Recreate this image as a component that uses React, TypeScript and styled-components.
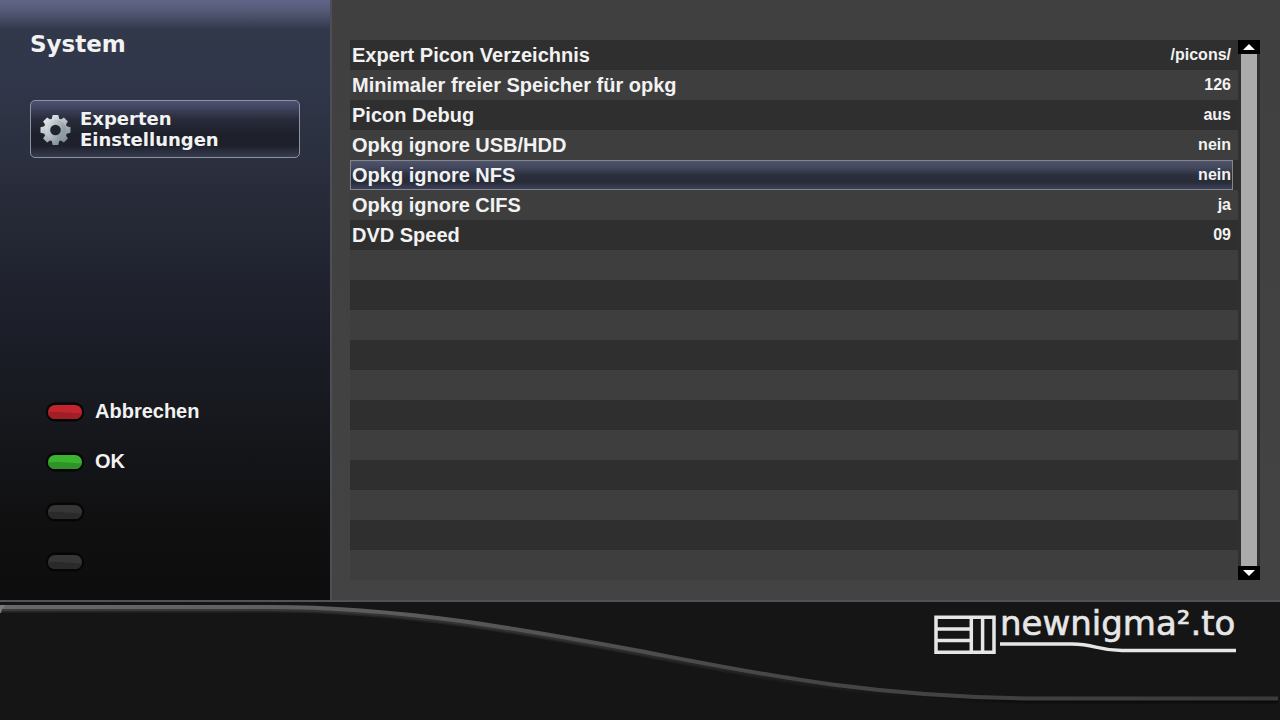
import React from "react";
import styled, { createGlobalStyle } from "styled-components";

const GlobalStyle = createGlobalStyle`
  *, *::before, *::after { box-sizing: border-box; }
  body { margin: 0; background: #151515; }
  button { font: inherit; color: inherit; }
`;

const Page = styled.div`
  min-height: 100vh;
  display: flex;
  flex-direction: column;
  background: #151515;
  color: #f2f2f2;
  font-family: "Liberation Sans", Arial, sans-serif;
  font-weight: 700;
`;

const Body = styled.div`
  flex: 1;
  display: grid;
  grid-template-columns: 332px minmax(0, 1fr);
`;

const Sidebar = styled.aside`
  display: flex;
  flex-direction: column;
  justify-content: space-between;
  padding: 28px 30px 14px;
  border-right: 2px solid #4e4e56;
  background: linear-gradient(
    #60658a 0,
    #555b78 10px,
    #31384a 30px,
    #31374a 80px,
    #282c3a 190px,
    #1d202b 310px,
    #16181d 420px,
    #101011 520px,
    #0d0d0d 600px
  );
`;

const Title = styled.h1`
  margin: 0 0 40px;
  font: 700 23px/32px "DejaVu Sans", sans-serif;
`;

const MenuButton = styled.button`
  width: 100%;
  display: flex;
  align-items: center;
  gap: 9px;
  padding: 7px 9px;
  border: 1px solid #8f919c;
  border-radius: 5px;
  background: linear-gradient(#4d5170 0, #41455f 12%, #282c3b 32%, #1d202a 60%, #1e212c 80%, #373c50 100%);
  text-align: left;
`;

const MenuText = styled.span`
  width: 160px;
  font: 700 18px/21px "DejaVu Sans", sans-serif;
`;

const Keys = styled.div`
  display: flex;
  flex-direction: column;
`;

const KeyButton = styled.button`
  height: 50px;
  display: flex;
  align-items: center;
  gap: 11px;
  padding: 0 0 0 16px;
  border: 0;
  background: none;
  font-size: 20px;
  line-height: 24px;
`;

const Main = styled.main`
  display: flex;
  align-items: flex-start;
  padding: 40px 20px 20px 18px;
  background: linear-gradient(#404040, #434343);
`;

const List = styled.ul`
  flex: 1;
  margin: 0;
  padding: 0;
  list-style: none;
  background: #303030;
`;

const Item = styled.li`
  height: 30px;
  &:nth-child(odd) { background: #2f2f2f; }
  &:nth-child(even) { background: #3e3e3e; }
`;

const Setting = styled.button<{ $selected: boolean }>`
  width: calc(100% - 5px);
  height: 30px;
  display: flex;
  align-items: center;
  justify-content: space-between;
  padding: 0 1px;
  border: 1px solid ${(p) => (p.$selected ? "#84868f" : "transparent")};
  background: ${(p) =>
    p.$selected
      ? "linear-gradient(#50546c 0, #41465c 25%, #2c303e 50%, #282b37 75%, #3a4058 100%)"
      : "none"};
`;

const Label = styled.span`
  font-size: 20px;
  line-height: 24px;
`;

const Value = styled.span`
  font-size: 16px;
  line-height: 24px;
`;

const Scrollbar = styled.div`
  width: 22px;
  align-self: stretch;
  display: flex;
  flex-direction: column;
  background: #303030;
`;

const Arrow = styled.button`
  height: 14px;
  display: flex;
  align-items: center;
  justify-content: center;
  padding: 0;
  border: 0;
  background: #000;
`;

const Thumb = styled.div`
  flex: 1;
  margin: 0 3px;
  background: #ababab;
`;

const Footer = styled.footer`
  display: grid;
  grid-template-columns: minmax(0, 1fr);
  border-top: 2px solid #52525a;
  background: #151515;
  & > * { grid-area: 1 / 1; }
`;

const Wave = styled.svg`
  display: block;
  width: 100%;
  height: 118px;
`;

const Brand = styled.svg`
  justify-self: end;
  margin-right: 42px;
`;

const settings = [
  ["Expert Picon Verzeichnis", "/picons/"],
  ["Minimaler freier Speicher für opkg", "126"],
  ["Picon Debug", "aus"],
  ["Opkg ignore USB/HDD", "nein"],
  ["Opkg ignore NFS", "nein"],
  ["Opkg ignore CIFS", "ja"],
  ["DVD Speed", "09"],
];
const emptyRows = 11;
const selectedRow = 4;

const keys = [
  { name: "Rot", text: "Abbrechen", top: "#c3252e", bottom: "#a01f27" },
  { name: "Grün", text: "OK", top: "#3bb531", bottom: "#2f9328" },
  { name: "Gelb", text: "", top: "#363636", bottom: "#2a2a2a" },
  { name: "Blau", text: "", top: "#363636", bottom: "#2a2a2a" },
];

function Gear() {
  return (
    <svg width="31" height="32" viewBox="-15.5 -17 31 32" aria-hidden="true">
      <defs>
        <linearGradient id="metal" gradientUnits="userSpaceOnUse" x1="-9" y1="-12" x2="9" y2="13">
          <stop offset="0" stopColor="#e3e7e9" />
          <stop offset="0.45" stopColor="#b4bdc3" />
          <stop offset="1" stopColor="#7d8992" />
        </linearGradient>
        <linearGradient id="ring" x1="0" y1="0" x2="1" y2="0.6">
          <stop offset="0" stopColor="#d9dee1" />
          <stop offset="1" stopColor="#8f9aa2" />
        </linearGradient>
      </defs>
      <g fill="url(#metal)">
        <circle r="11.8" />
        <path d="M-4 -10L-2.8 -15H2.8L4 -10V10L2.8 15H-2.8L-4 10Z" />
        <path d="M-10 -4L-15 -2.8V2.8L-10 4H10L15 2.8V-2.8L10 -4Z" />
        <path d="M-4.6 -9.9L-8.4 -12.4L-12.4 -8.4L-9.9 -4.6L4.6 9.9L8.4 12.4L12.4 8.4L9.9 4.6Z" />
        <path d="M4.6 -9.9L8.4 -12.4L12.4 -8.4L9.9 -4.6L-4.6 9.9L-8.4 12.4L-12.4 8.4L-9.9 4.6Z" />
      </g>
      <circle r="8" fill="none" stroke="url(#ring)" strokeWidth="5" />
      <circle r="5.3" fill="#20242e" />
    </svg>
  );
}

function Pill({ top, bottom }: { top: string; bottom: string }) {
  return (
    <svg width="38" height="22" viewBox="0 -2 38 22" aria-hidden="true">
      <rect x="0" y="0.5" width="38" height="19" rx="9" fill="#060606" />
      <rect x="2" y="3" width="34" height="14" rx="7" fill={top} />
      <path d="M2 10.5C13 8.5 23 12 35.8 11C35 15 32.5 17 29 17H9C5 17 2.2 14.5 2 10.5Z" fill={bottom} />
    </svg>
  );
}

function FooterWave() {
  const curve = "M0 3H270C400 3 520 25 640 47C760 70 870 93.5 1040 94.5H1278";
  return (
    <Wave viewBox="0 0 1280 118" preserveAspectRatio="none" aria-hidden="true">
      <defs>
        <linearGradient id="shine" gradientUnits="userSpaceOnUse" x1="0" y1="0" x2="1280" y2="0">
          <stop offset="0" stopColor="#686868" />
          <stop offset="0.3" stopColor="#5c5c5c" />
          <stop offset="0.6" stopColor="#474747" />
          <stop offset="1" stopColor="#3a3a3a" />
        </linearGradient>
        <linearGradient id="shade" gradientUnits="userSpaceOnUse" x1="0" y1="0" x2="1280" y2="0">
          <stop offset="0" stopColor="#3a3a3a" />
          <stop offset="0.45" stopColor="#303030" />
          <stop offset="0.8" stopColor="#0d0d0d" />
          <stop offset="1" stopColor="#0b0b0b" />
        </linearGradient>
      </defs>
      <g fill="none">
        <path d={curve} transform="translate(0 5)" stroke="url(#shade)" strokeWidth="5" opacity="0.5" />
        <path d={curve} transform="translate(0 4)" stroke="url(#shade)" strokeWidth="4" />
        <path d={curve} transform="translate(0 2)" stroke="url(#shine)" strokeWidth="4" />
      </g>
      <path d="M0 3H6L2 7L1 11H0Z" fill="#7a7a7a" />
    </Wave>
  );
}

function Logo() {
  return (
    <Brand width="306" height="58" viewBox="0 -2 306 58" role="img" aria-label="newnigma².to">
      <g fill="none" stroke="#e6e6e6" strokeWidth="3.5">
        <path d="M4 13.2H62V48.2H4Z" />
        <path d="M4 25H39M4 36.5H39" />
        <path d="M39.3 13.2V48.2M50.6 13.2V48.2" />
        <path d="M68 40H140C163 40 165 46.5 190 46.5H304" />
      </g>
      <text
        x="68"
        y="31"
        fill="#e6e6e6"
        stroke="#e6e6e6"
        strokeWidth="0.6"
        fontFamily="DejaVu Sans, sans-serif"
        fontSize="34"
        fontWeight="400"
      >
        newnigma².to
      </text>
    </Brand>
  );
}

export default function App() {
  return (
    <Page>
      <GlobalStyle />
      <Body>
        <Sidebar>
          <div>
            <Title>System</Title>
            <MenuButton type="button">
              <Gear />
              <MenuText>Experten Einstellungen</MenuText>
            </MenuButton>
          </div>
          <Keys>
            {keys.map((k) => (
              <KeyButton key={k.name} type="button" aria-label={k.text || k.name}>
                <Pill top={k.top} bottom={k.bottom} />
                {k.text}
              </KeyButton>
            ))}
          </Keys>
        </Sidebar>
        <Main>
          <List>
            {settings.map(([label, value], i) => (
              <Item key={label}>
                <Setting type="button" $selected={i === selectedRow} aria-pressed={i === selectedRow}>
                  <Label>{label}</Label>
                  <Value>{value}</Value>
                </Setting>
              </Item>
            ))}
            {Array.from({ length: emptyRows }, (_, i) => (
              <Item key={i} aria-hidden="true" />
            ))}
          </List>
          <Scrollbar>
            <Arrow type="button" aria-label="Nach oben">
              <svg width="12" height="6" viewBox="0 0 12 6">
                <path d="M0 6L6 0L12 6Z" fill="#fff" />
              </svg>
            </Arrow>
            <Thumb />
            <Arrow type="button" aria-label="Nach unten">
              <svg width="12" height="6" viewBox="0 0 12 6">
                <path d="M0 0H12L6 6Z" fill="#fff" />
              </svg>
            </Arrow>
          </Scrollbar>
        </Main>
      </Body>
      <Footer>
        <FooterWave />
        <Logo />
      </Footer>
    </Page>
  );
}
